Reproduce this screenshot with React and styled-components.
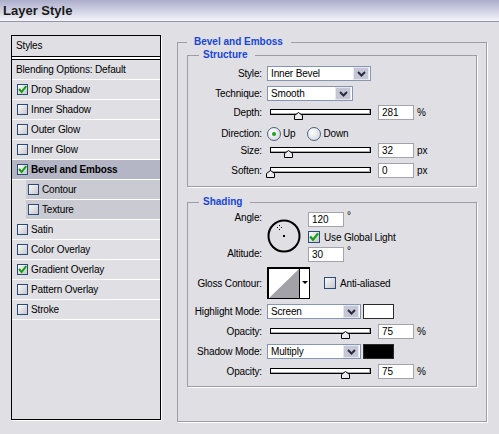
import React from 'react';
import styled, { createGlobalStyle } from 'styled-components';

const GlobalStyle = createGlobalStyle`
  html, body {
    margin: 0;
    padding: 0;
  }
  body {
    background: #dfdfe4;
    font-family: "Liberation Sans", Arial, sans-serif;
    font-size: 10px;
    letter-spacing: -0.15px;
    color: #000;
  }
`;

const Window = styled.div`
  width: 499px;
  height: 434px;
  background: #dfdfe4;
  overflow: hidden;
`;

const TitleBar = styled.div`
  height: 21px;
  line-height: 21px;
  padding-left: 3px;
  border-bottom: 1px solid #9494ae;
  background: linear-gradient(#acadcb, #f4f4fa);
  font-size: 13px;
  font-weight: bold;
  letter-spacing: 0;
  color: #1a1a1a;
`;

const Main = styled.div`
  display: flex;
  align-items: flex-start;
  gap: 16px;
  padding: 13px 0 0 11px;
`;

/* left list */

const StylesPanel = styled.div`
  box-sizing: border-box;
  width: 150px;
  height: 385px;
  border: 1px solid #000;
  box-shadow: 1px 1px 0 #fff;
  display: flex;
  flex-direction: column;
`;

const PanelHeader = styled.div`
  height: 20px;
  line-height: 20px;
  padding-left: 4px;
  border-bottom: 1px solid #000;
`;

const Divider = styled.div`
  height: 2px;
  background: #fff;
  border-bottom: 1px solid #000;
`;

const StyleRow = styled.div`
  height: 19px;
  display: flex;
  align-items: center;
  gap: 3px;
  border-bottom: 1px solid #fff;
  margin-left: ${p => (p.$sub ? 14 : 0)}px;
  padding-left: ${p => (p.$sub ? 2 : p.$plain ? 4 : 5)}px;
  background: ${p => (p.$selected ? '#b4b6c6' : p.$sub ? '#c9cad2' : 'transparent')};
  font-weight: ${p => (p.$selected ? 'bold' : 'normal')};
`;

/* check boxes and radios */

const Box = styled.span`
  box-sizing: border-box;
  flex: none;
  width: ${p => p.$size}px;
  height: ${p => p.$size}px;
  border: 1px solid #2a4c78;
  background: linear-gradient(135deg, #fbfbfb, #c6c6cc);
  display: inline-flex;
  align-items: center;
  justify-content: center;
`;

const CheckLabel = styled.span`
  display: flex;
  align-items: center;
  gap: ${p => p.$gap || 3}px;
  margin-left: ${p => p.$ml || 0}px;
`;

function Check({ on, size = 11 }) {
  return (
    <Box $size={size}>
      {on && (
        <svg width={size - 2} height={size - 2} viewBox="0 0 9 9">
          <polyline points="1,4 3.6,7 8.2,1.2" fill="none" stroke="#12a012" strokeWidth="2" />
        </svg>
      )}
    </Box>
  );
}

const Radio = styled.span`
  box-sizing: border-box;
  flex: none;
  width: 14px;
  height: 14px;
  border-radius: 50%;
  border: 1px solid #4e6480;
  background: radial-gradient(circle at 35% 35%, #ffffff, #cfd0d8);
  display: inline-flex;
  align-items: center;
  justify-content: center;
  &::after {
    content: '';
    display: ${p => (p.$on ? 'block' : 'none')};
    width: 4px;
    height: 4px;
    border-radius: 50%;
    background: #1fa01f;
  }
`;

/* group boxes */

const Group = styled.fieldset`
  box-sizing: border-box;
  width: ${p => p.$w}px;
  height: ${p => p.$h}px;
  min-width: 0;
  margin: ${p => p.$mt || 0}px 0 0;
  padding: 0 ${p => p.$pad || 0}px;
  border: 1px solid #9d9da6;
  box-shadow: 1px 1px 0 #fff;
`;

const Legend = styled.legend`
  margin-left: ${p => p.$ml || 0}px;
  padding: 0 8px 0 ${p => p.$pl || 7}px;
  line-height: 12px;
  font-size: 10px;
  font-weight: bold;
  letter-spacing: 0;
  color: #1746d4;
`;

const FormRow = styled.div`
  display: grid;
  grid-template-columns: 74px auto;
  column-gap: 5px;
  align-items: center;
  height: ${p => p.$h || 15}px;
  margin-top: ${p => p.$mt ?? 5}px;
`;

const Label = styled.span`
  text-align: right;
  white-space: nowrap;
`;

const Controls = styled.div`
  display: flex;
  align-items: center;
  gap: ${p => p.$gap || 0}px;
  height: 100%;
`;

/* select */

const SelectBox = styled.div`
  box-sizing: border-box;
  width: ${p => p.$w}px;
  height: 15px;
  padding: 0 1px 0 3px;
  border: 1px solid #8496b2;
  background: #fff;
  display: flex;
  align-items: center;
  justify-content: space-between;
`;

const SelectButton = styled.span`
  box-sizing: border-box;
  width: 16px;
  height: 13px;
  background: #c5c7d6;
  border: 1px solid #e6e7ef;
  display: flex;
  align-items: center;
  justify-content: center;
`;

function Select({ value, width }) {
  return (
    <SelectBox $w={width}>
      <span>{value}</span>
      <SelectButton>
        <svg width="9" height="6" viewBox="0 0 9 6">
          <polyline points="1,1 4.5,4.5 8,1" fill="none" stroke="#2c2c3a" strokeWidth="2" />
        </svg>
      </SelectButton>
    </SelectBox>
  );
}

const Swatch = styled.span`
  box-sizing: border-box;
  width: 31px;
  height: 15px;
  margin-left: 2px;
  border: 1px solid #2a2a2a;
  background: ${p => p.$color};
`;

/* slider */

const SliderWrap = styled.div`
  box-sizing: border-box;
  position: relative;
  width: 101px;
  height: 15px;
  padding-top: 4px;
  margin: 0 7px 0 3px;
`;

const Track = styled.div`
  box-sizing: border-box;
  height: 6px;
  border: 1px solid #000;
  background: #fff;
  box-shadow: inset -1px -1px 0 #a8a8ae;
`;

const Thumb = styled.svg`
  position: absolute;
  top: 7px;
`;

function Slider({ frac }) {
  return (
    <SliderWrap>
      <Track />
      <Thumb width="9" height="8" viewBox="0 0 9 8" style={{ left: Math.round(frac * 100) - 4 }}>
        <polygon points="0.5,7.5 0.5,3.5 4.5,0.5 8.5,3.5 8.5,7.5" fill="#ececf0" stroke="#000" />
      </Thumb>
    </SliderWrap>
  );
}

const NumField = styled.input`
  box-sizing: border-box;
  width: 36px;
  height: 15px;
  margin: 0;
  padding: 0 0 0 3px;
  border: 1px solid #a3a3ab;
  background: #fff;
  font: inherit;
  letter-spacing: 0;
  color: #000;
  outline: none;
`;

const Unit = styled.span`
  margin-left: 3px;
  align-self: ${p => (p.$top ? 'flex-start' : 'center')};
  line-height: ${p => (p.$top ? '8px' : 'normal')};
`;

function Field({ value, unit, top }) {
  return (
    <>
      <NumField readOnly value={value} />
      {unit && <Unit $top={top}>{unit}</Unit>}
    </>
  );
}

function SliderRow({ label, frac, value, unit, mt }) {
  return (
    <FormRow $mt={mt}>
      <Label>{label}</Label>
      <Controls>
        <Slider frac={frac} />
        <Field value={value} unit={unit} />
      </Controls>
    </FormRow>
  );
}

/* angle + contour */

const AngleBlock = styled.div`
  display: grid;
  grid-template-columns: 74px auto;
  column-gap: 5px;
  height: 50px;
  margin-top: 4px;
`;

const LabelStack = styled.div`
  display: flex;
  flex-direction: column;
  justify-content: space-between;
  text-align: right;
  line-height: 12px;
  padding-bottom: 2px;
`;

const AngleControls = styled.div`
  display: flex;
  align-items: flex-start;
  gap: 7px;
`;

const Dial = styled.svg`
  margin-top: 7px;
  flex: none;
`;

const FieldStack = styled.div`
  display: flex;
  flex-direction: column;
  justify-content: space-between;
  height: 50px;
`;

const FieldLine = styled.div`
  display: flex;
  align-items: center;
  height: 15px;
`;

const ContourPicker = styled.div`
  box-sizing: border-box;
  display: flex;
  width: 43px;
  height: 32px;
  border: 1px solid #000;
  border-width: 2px 1px 1px 2px;
  background: #fff;
`;

const ContourArrow = styled.span`
  flex: 1;
  border-left: 1px solid #000;
  display: flex;
  justify-content: center;
  padding-top: 12px;
  &::before {
    content: '';
    width: 0;
    height: 0;
    border-left: 3px solid transparent;
    border-right: 3px solid transparent;
    border-top: 3px solid #000;
  }
`;

const listItems = [
  { name: 'Drop Shadow', on: true },
  { name: 'Inner Shadow' },
  { name: 'Outer Glow' },
  { name: 'Inner Glow' },
  { name: 'Bevel and Emboss', on: true, selected: true },
  { name: 'Contour', sub: true },
  { name: 'Texture', sub: true },
  { name: 'Satin' },
  { name: 'Color Overlay' },
  { name: 'Gradient Overlay', on: true },
  { name: 'Pattern Overlay' },
  { name: 'Stroke' },
];

export default function App() {
  return (
    <Window>
      <GlobalStyle />
      <TitleBar>Layer Style</TitleBar>
      <Main>
        <StylesPanel>
          <PanelHeader>Styles</PanelHeader>
          <Divider />
          <StyleRow $plain>Blending Options: Default</StyleRow>
          {listItems.map(item => (
            <StyleRow key={item.name} $sub={item.sub} $selected={item.selected}>
              <Check on={item.on} />
              <span>{item.name}</span>
            </StyleRow>
          ))}
        </StylesPanel>

        <Group $w={310} $h={386} $mt={1} $pad={9}>
          <Legend>Bevel and Emboss</Legend>

          <Group $w={290} $h={138} $mt={1}>
            <Legend $ml={11} $pl={4}>Structure</Legend>
            <FormRow>
              <Label>Style:</Label>
              <Controls><Select value="Inner Bevel" width={104} /></Controls>
            </FormRow>
            <FormRow>
              <Label>Technique:</Label>
              <Controls><Select value="Smooth" width={86} /></Controls>
            </FormRow>
            <SliderRow label="Depth:" frac={0.28} value="281" unit="%" mt={4} />
            <FormRow $mt={6}>
              <Label>Direction:</Label>
              <Controls $gap={12}>
                <CheckLabel $gap={2}><Radio $on />Up</CheckLabel>
                <CheckLabel $gap={2}><Radio />Down</CheckLabel>
              </Controls>
            </FormRow>
            <SliderRow label="Size:" frac={0.18} value="32" unit="px" mt={2} />
            <SliderRow label="Soften:" frac={0} value="0" unit="px" />
          </Group>

          <Group $w={290} $h={191} $mt={9}>
            <Legend $ml={11} $pl={4}>Shading</Legend>
            <AngleBlock>
              <LabelStack>
                <span>Angle:</span>
                <span>Altitude:</span>
              </LabelStack>
              <AngleControls>
                <Dial width="34" height="34" viewBox="0 0 34 34">
                  <circle cx="17" cy="17" r="15.5" fill="none" stroke="#000" strokeWidth="2" />
                  <rect x="16" y="16" width="2" height="2" fill="#000" />
                  <rect x="12" y="6" width="1" height="1" fill="#000" />
                  <rect x="10" y="8" width="1" height="1" fill="#000" />
                  <rect x="14" y="8" width="1" height="1" fill="#000" />
                  <rect x="12" y="10" width="1" height="1" fill="#000" />
                </Dial>
                <FieldStack>
                  <FieldLine><Field value="120" unit="°" top /></FieldLine>
                  <CheckLabel $gap={4}><Check on size={12} />Use Global Light</CheckLabel>
                  <FieldLine><Field value="30" unit="°" top /></FieldLine>
                </FieldStack>
              </AngleControls>
            </AngleBlock>

            <FormRow $h={32} $mt={5}>
              <Label>Gloss Contour:</Label>
              <Controls>
                <ContourPicker>
                  <svg width="30" height="29" viewBox="0 0 30 29">
                    <polygon points="0,29 30,0 30,29" fill="#a2a2a8" />
                  </svg>
                  <ContourArrow />
                </ContourPicker>
                <CheckLabel $gap={4} $ml={14}><Check size={12} />Anti-aliased</CheckLabel>
              </Controls>
            </FormRow>

            <FormRow>
              <Label>Highlight Mode:</Label>
              <Controls>
                <Select value="Screen" width={94} />
                <Swatch $color="#fff" />
              </Controls>
            </FormRow>
            <SliderRow label="Opacity:" frac={0.75} value="75" unit="%" />
            <FormRow>
              <Label>Shadow Mode:</Label>
              <Controls>
                <Select value="Multiply" width={94} />
                <Swatch $color="#000" />
              </Controls>
            </FormRow>
            <SliderRow label="Opacity:" frac={0.75} value="75" unit="%" />
          </Group>
        </Group>
      </Main>
    </Window>
  );
}
